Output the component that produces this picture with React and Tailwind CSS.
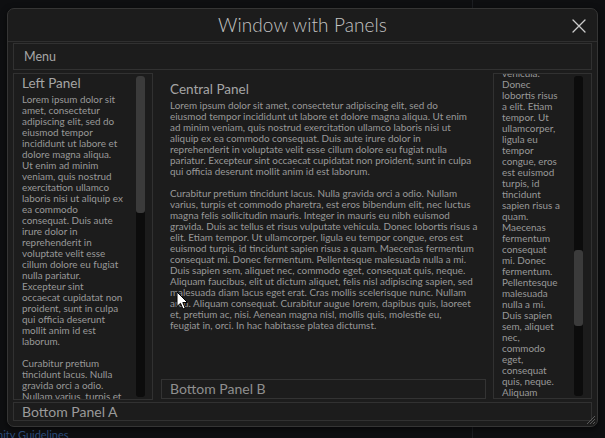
import React from "react";

const leftLines = [
  "Lorem ipsum dolor sit",
  "amet, consectetur",
  "adipiscing elit, sed do",
  "eiusmod tempor",
  "incididunt ut labore et",
  "dolore magna aliqua.",
  "Ut enim ad minim",
  "veniam, quis nostrud",
  "exercitation ullamco",
  "laboris nisi ut aliquip ex",
  "ea commodo",
  "consequat. Duis aute",
  "irure dolor in",
  "reprehenderit in",
  "voluptate velit esse",
  "cillum dolore eu fugiat",
  "nulla pariatur.",
  "Excepteur sint",
  "occaecat cupidatat non",
  "proident, sunt in culpa",
  "qui officia deserunt",
  "mollit anim id est",
  "laborum.",
  "",
  "Curabitur pretium",
  "tincidunt lacus. Nulla",
  "gravida orci a odio.",
  "Nullam varius, turpis et",
];

const centralLines = [
  "Lorem ipsum dolor sit amet, consectetur adipiscing elit, sed do",
  "eiusmod tempor incididunt ut labore et dolore magna aliqua. Ut enim",
  "ad minim veniam, quis nostrud exercitation ullamco laboris nisi ut",
  "aliquip ex ea commodo consequat. Duis aute irure dolor in",
  "reprehenderit in voluptate velit esse cillum dolore eu fugiat nulla",
  "pariatur. Excepteur sint occaecat cupidatat non proident, sunt in culpa",
  "qui officia deserunt mollit anim id est laborum.",
  "",
  "Curabitur pretium tincidunt lacus. Nulla gravida orci a odio. Nullam",
  "varius, turpis et commodo pharetra, est eros bibendum elit, nec luctus",
  "magna felis sollicitudin mauris. Integer in mauris eu nibh euismod",
  "gravida. Duis ac tellus et risus vulputate vehicula. Donec lobortis risus a",
  "elit. Etiam tempor. Ut ullamcorper, ligula eu tempor congue, eros est",
  "euismod turpis, id tincidunt sapien risus a quam. Maecenas fermentum",
  "consequat mi. Donec fermentum. Pellentesque malesuada nulla a mi.",
  "Duis sapien sem, aliquet nec, commodo eget, consequat quis, neque.",
  "Aliquam faucibus, elit ut dictum aliquet, felis nisl adipiscing sapien, sed",
  "malesuada diam lacus eget erat. Cras mollis scelerisque nunc. Nullam",
  "arcu. Aliquam consequat. Curabitur augue lorem, dapibus quis, laoreet",
  "et, pretium ac, nisi. Aenean magna nisl, mollis quis, molestie eu,",
  "feugiat in, orci. In hac habitasse platea dictumst.",
];

const rightLines = [
  "vehicula.",
  "Donec",
  "lobortis risus",
  "a elit. Etiam",
  "tempor. Ut",
  "ullamcorper,",
  "ligula eu",
  "tempor",
  "congue, eros",
  "est euismod",
  "turpis, id",
  "tincidunt",
  "sapien risus a",
  "quam.",
  "Maecenas",
  "fermentum",
  "consequat",
  "mi. Donec",
  "fermentum.",
  "Pellentesque",
  "malesuada",
  "nulla a mi.",
  "Duis sapien",
  "sem, aliquet",
  "nec,",
  "commodo",
  "eget,",
  "consequat",
  "quis, neque.",
  "Aliquam",
  "faucibus, elit",
];

function Lines({ lines }) {
  return (
    <div className="text-[9.9px] leading-[11px] text-[#999999]">
      {lines.map((l, i) => (
        <div key={i} className="h-[11px] whitespace-nowrap">{l || "\u00a0"}</div>
      ))}
    </div>
  );
}

function Scrollbar({ thumbTop, thumbH }) {
  return (
    <div className="w-[9px] my-[2px] flex flex-col rounded-[3px] bg-[#0c0c0c]">
      <div className={`${thumbTop} ${thumbH} w-full rounded-[3px] bg-[#3b3b3b]`} />
    </div>
  );
}

export default function App() {
  return (
    <div className="relative w-[605px] h-[438px] overflow-hidden bg-[#0e0f11] font-['Lato',sans-serif]">
      {/* background vertical separator */}
      <div className="absolute left-[472px] top-0 h-full w-px bg-[#1c1e22]" />

      <div className="relative pt-[8px] pl-[7px]">
        <div className="relative w-[591px] h-[419px] flex flex-col rounded-[7px] border border-[#353535] bg-[#1c1c1c] shadow-[0_2px_6px_rgba(0,0,0,0.6)]">
          {/* Title bar */}
          <div className="relative h-[33px] shrink-0 flex items-center justify-center border-b border-[#2f2f2f]">
            <span className="text-[19px] leading-[22px] font-light text-[#c4c4c4] tracking-[0.1px]">Window with Panels</span>
            <svg className="absolute right-[11px] top-[10px]" width="14" height="14" viewBox="0 0 14 14">
              <path d="M1 1 L13 13 M13 1 L1 13" stroke="#cccccc" strokeWidth="1.3" strokeLinecap="round" />
            </svg>
          </div>

          <div className="flex-1 flex flex-col px-[5px] pt-[1px]">
            {/* Menu */}
            <div className="h-[27px] shrink-0 flex items-center border border-[#313131] pl-[10px]">
              <span className="text-[12.5px] leading-[16px] text-[#a6a6a6]">Menu</span>
            </div>

            {/* Main row */}
            <div className="mt-[3px] h-[327px] shrink-0 flex">
              {/* Left panel */}
              <div className="w-[140px] shrink-0 flex border border-[#313131]">
                <div className="flex-1 overflow-hidden pl-[8px] pt-[1px]">
                  <div className="text-[13.5px] leading-[16px] text-[#a5a5a5]">Left Panel</div>
                  <div className="mt-[3px]">
                    <Lines lines={leftLines} />
                  </div>
                </div>
                <div className="mr-[7px] flex">
                  <Scrollbar thumbTop="mt-0" thumbH="h-[137px]" />
                </div>
              </div>

              {/* Central panel */}
              <div className="flex-1 flex flex-col">
                <div className="flex-1 overflow-hidden pl-[17px] pt-[8px]">
                  <div className="text-[13.5px] leading-[16px] text-[#a5a5a5]">Central Panel</div>
                  <div className="mt-[3px]">
                    <Lines lines={centralLines} />
                  </div>
                </div>
                <div className="ml-[8px] mr-[7px] mb-[1px] h-[20px] shrink-0 flex items-center border border-[#333333] pl-[8px]">
                  <span className="text-[14px] leading-[18px] text-[#8f8f8f]">Bottom Panel B</span>
                </div>
              </div>

              {/* Right panel */}
              <div className="w-[99px] h-[326px] shrink-0 flex border border-[#313131]">
                <div className="flex-1 overflow-hidden pl-[8px]">
                  <div className="mt-[-6px]">
                    <Lines lines={rightLines} />
                  </div>
                </div>
                <div className="mr-[8px] flex">
                  <Scrollbar thumbTop="mt-[174px]" thumbH="h-[76px]" />
                </div>
              </div>
            </div>

            {/* Bottom panel A */}
            <div className="mt-[2px] h-[19px] shrink-0 flex items-center border border-[#313131] pl-[8px]">
              <span className="text-[14px] leading-[18px] text-[#9a9a9a]">Bottom Panel A</span>
            </div>
          </div>

          {/* resize grip */}
          <svg className="absolute right-[1px] bottom-[1px]" width="11" height="11" viewBox="0 0 11 11">
            <path d="M2 10 L10 2 M5 10 L10 5 M8 10 L10 8" stroke="#5a5a5a" strokeWidth="1" />
          </svg>
        </div>
      </div>

      {/* background link text */}
      <div className="absolute left-[-3px] top-[428px] text-[11px] leading-[14px] text-[#2c4a78] whitespace-nowrap">
        nity Guidelines
      </div>

      {/* mouse cursor */}
      <svg className="absolute left-[176px] top-[291px]" width="13" height="20" viewBox="0 0 13 20">
        <path d="M1 1 L1 15.5 L4.5 12.3 L7 18 L9.2 17 L6.8 11.5 L11.5 11.5 Z" fill="#ffffff" stroke="#000000" strokeWidth="1" strokeLinejoin="round" />
      </svg>
    </div>
  );
}
